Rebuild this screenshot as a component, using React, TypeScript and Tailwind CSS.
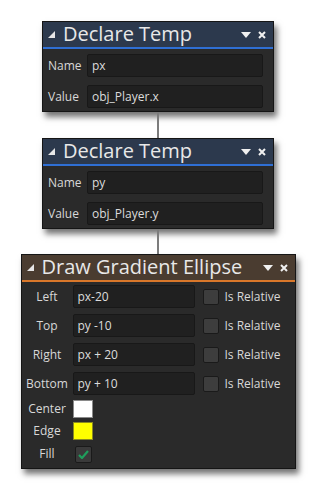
import React from 'react'

const font = { fontFamily: '"Open Sans", "Noto Sans", sans-serif' }

function Corner() {
  return (
    <svg width="7" height="7" viewBox="0 0 7 7" className="shrink-0">
      <polygon points="7,0 7,7 0,7" fill="#e6e6e6" />
    </svg>
  )
}

function HeaderIcons() {
  return (
    <div className="ml-auto flex items-center gap-[7px]">
      <svg width="10" height="6" viewBox="0 0 10 6">
        <polygon points="0,0 10,0 5,6" fill="#f0f0f0" />
      </svg>
      <svg width="8" height="8" viewBox="0 0 8 8">
        <path d="M1 1 L7 7 M7 1 L1 7" stroke="#f0f0f0" strokeWidth="2" />
      </svg>
    </div>
  )
}

function Header({ title, bg, line }: { title: string; bg: string; line: string }) {
  return (
    <>
      <div className={`flex items-center h-[25px] pl-[5px] pr-[7px] gap-[8px] ${bg}`}>
        <Corner />
        <span className="text-[20px] leading-none text-[#e8e8e8] -mt-[1px]">{title}</span>
        <HeaderIcons />
      </div>
      <div className={`h-[2px] ${line}`} />
    </>
  )
}

function Field({ value, className }: { value: string; className: string }) {
  return (
    <div
      className={`h-[23px] flex items-center px-[4px] bg-[#202020] border border-[#181818] rounded-[2px] text-[12px] text-[#dcdcdc] ${className}`}
    >
      {value}
    </div>
  )
}

function DeclareTemp({ name, value }: { name: string; value: string }) {
  return (
    <div className="w-[232px] bg-[#2a2a2a] border border-[#151515] shadow-[3px_5px_6px_rgba(0,0,0,0.55)]">
      <Header title="Declare Temp" bg="bg-[#2c394d]" line="bg-[#2f6fd4]" />
      <div className="flex flex-col gap-[8px] pt-[5px] pb-[3px] pl-[5px] pr-[10px]">
        <div className="flex items-center">
          <span className="w-[39px] text-[12px] text-[#d8d8d8]">Name</span>
          <Field value={name} className="flex-1" />
        </div>
        <div className="flex items-center">
          <span className="w-[39px] text-[12px] text-[#d8d8d8]">Value</span>
          <Field value={value} className="flex-1" />
        </div>
      </div>
    </div>
  )
}

function Connector({ h }: { h: string }) {
  return <div className={`w-[2px] bg-[#7c7c7c] ${h}`} />
}

const rows = [
  { label: 'Left', value: 'px-20' },
  { label: 'Top', value: 'py -10' },
  { label: 'Right', value: 'px + 20' },
  { label: 'Bottom', value: 'py + 10' },
]

function Ellipse() {
  return (
    <div className="w-[275px] bg-[#2a2a2a] border border-[#151515] shadow-[3px_5px_6px_rgba(0,0,0,0.55)]">
      <Header title="Draw Gradient Ellipse" bg="bg-[#4a3c30]" line="bg-[#d9772a]" />
      <div className="flex flex-col pt-[3px] pb-[5px]">
        <div className="flex flex-col gap-[6px]">
          {rows.map((r) => (
            <div key={r.label} className="flex items-center">
              <span className="w-[51px] text-center text-[12px] text-[#d8d8d8]">{r.label}</span>
              <Field value={r.value} className="w-[122px]" />
              <div className="ml-[8px] w-[16px] h-[16px] rounded-[2px] bg-[#3d3d3d] border border-[#1a1a1a]" />
              <span className="ml-[6px] text-[12px] text-[#d8d8d8]">Is Relative</span>
            </div>
          ))}
        </div>
        <div className="flex items-center mt-[5px]">
          <span className="w-[51px] text-center text-[12px] text-[#d8d8d8]">Center</span>
          <div className="w-[20px] h-[18px] bg-white border border-[#8a8a8a]" />
        </div>
        <div className="flex items-center mt-[4px]">
          <span className="w-[51px] text-center text-[12px] text-[#d8d8d8]">Edge</span>
          <div className="w-[20px] h-[18px] bg-[#ffff00] border border-[#8a8a20]" />
        </div>
        <div className="flex items-center mt-[5px]">
          <span className="w-[51px] text-center text-[12px] text-[#d8d8d8]">Fill</span>
          <div className="ml-[2px] w-[17px] h-[17px] rounded-[2px] bg-[#3a3a3a] border border-[#1a1a1a] flex items-center justify-center">
            <svg width="11" height="9" viewBox="0 0 11 9">
              <path d="M1 5 L4 8 L10 1" stroke="#1f9e5c" strokeWidth="2.2" fill="none" />
            </svg>
          </div>
        </div>
      </div>
    </div>
  )
}

export default function App() {
  return (
    <div className="w-[316px] h-[487px] bg-white flex flex-col items-center pt-[21px]" style={font}>
      <DeclareTemp name="px" value="obj_Player.x" />
      <Connector h="h-[26px]" />
      <DeclareTemp name="py" value="obj_Player.y" />
      <Connector h="h-[25px]" />
      <Ellipse />
    </div>
  )
}
